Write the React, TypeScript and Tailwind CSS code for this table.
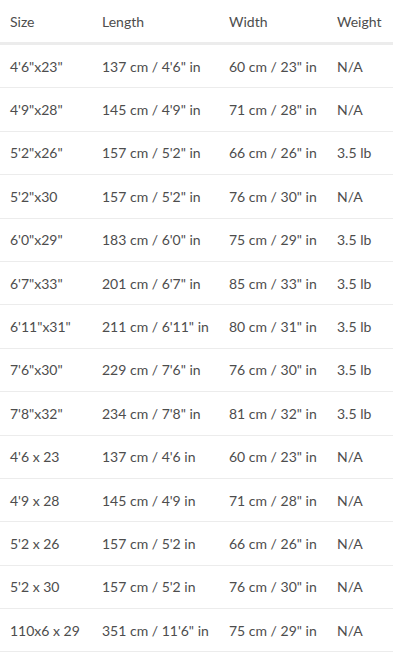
const rows = [
  ["4'6\"x23\"", "137 cm / 4'6\" in", "60 cm / 23\" in", "N/A"],
  ["4'9\"x28\"", "145 cm / 4'9\" in", "71 cm / 28\" in", "N/A"],
  ["5'2\"x26\"", "157 cm / 5'2\" in", "66 cm / 26\" in", "3.5 lb"],
  ["5'2\"x30", "157 cm / 5'2\" in", "76 cm / 30\" in", "N/A"],
  ["6'0\"x29\"", "183 cm / 6'0\" in", "75 cm / 29\" in", "3.5 lb"],
  ["6'7\"x33\"", "201 cm / 6'7\" in", "85 cm / 33\" in", "3.5 lb"],
  ["6'11\"x31\"", "211 cm / 6'11\" in", "80 cm / 31\" in", "3.5 lb"],
  ["7'6\"x30\"", "229 cm / 7'6\" in", "76 cm / 30\" in", "3.5 lb"],
  ["7'8\"x32\"", "234 cm / 7'8\" in", "81 cm / 32\" in", "3.5 lb"],
  ["4'6 x 23", "137 cm / 4'6 in", "60 cm / 23\" in", "N/A"],
  ["4'9 x 28", "145 cm / 4'9 in", "71 cm / 28\" in", "N/A"],
  ["5'2 x 26", "157 cm / 5'2 in", "66 cm / 26\" in", "N/A"],
  ["5'2 x 30", "157 cm / 5'2 in", "76 cm / 30\" in", "N/A"],
  ["110x6 x 29", "351 cm / 11'6\" in", "75 cm / 29\" in", "N/A"],
];

export default function App() {
  return (
    <div className="w-[393px] bg-white font-['Lato','Nunito',sans-serif] text-[14px] text-[#4d4d4d]">
      <div className="grid h-[45px] grid-cols-[92px_127px_108px_66px] items-center border-b-[3px] border-[#ececec]">
        {["Size", "Length", "Width", "Weight"].map((h) => (
          <div key={h} className="pl-[10px]">
            {h}
          </div>
        ))}
      </div>
      {rows.map((r, ri) => (
        <div
          key={ri}
          className="grid h-[43.4px] grid-cols-[92px_127px_108px_66px] items-center border-b border-[#ececec]"
        >
          {r.map((c, ci) => (
            <div key={ci} className="whitespace-nowrap pl-[10px]">
              {c}
            </div>
          ))}
        </div>
      ))}
    </div>
  );
}
